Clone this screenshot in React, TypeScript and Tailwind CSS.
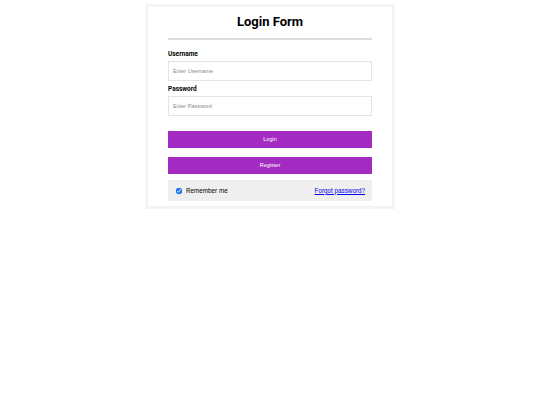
export default function App() {
  return (
    <div className="min-h-screen bg-white flex justify-center items-start pt-[4px] font-['Roboto',sans-serif]">
      <div className="w-[250px] border-[3px] border-[#f4f4f4] px-[20px] pt-[7px] pb-[5px]">
        <h1 className="text-center text-[13px] font-bold leading-[16px] text-black">Login Form</h1>
        <div className="mt-[8px] h-[2px] bg-[#dddddd]"></div>
        <form className="mt-[10px] flex flex-col" onSubmit={(e) => e.preventDefault()}>
          <label className="text-[6.5px] font-bold leading-[8px] text-black">Username</label>
          <input
            type="text"
            placeholder="Enter Username"
            className="mt-[3px] h-[20px] border border-[#e4e4e4] px-[4px] text-[5.5px] font-['Liberation_Sans',sans-serif] placeholder:text-[#888] outline-none"
          />
          <label className="mt-[4px] text-[6.5px] font-bold leading-[8px] text-black">Password</label>
          <input
            type="password"
            placeholder="Enter Password"
            className="mt-[3px] h-[20px] border border-[#e4e4e4] px-[4px] text-[5.5px] font-['Liberation_Sans',sans-serif] placeholder:text-[#888] outline-none"
          />
          <button className="mt-[15px] h-[17px] bg-[#a42bc2] text-white text-[5.5px] font-['Liberation_Sans',sans-serif]">
            Login
          </button>
          <button className="mt-[9px] h-[17px] bg-[#a42bc2] text-white text-[5.5px] font-['Liberation_Sans',sans-serif]">
            Register
          </button>
          <div className="mt-[6px] h-[21px] bg-[#efefef] flex items-center justify-between pl-[8px] pr-[7px]">
            <label className="flex items-center gap-[4px] text-[6.3px] text-black font-['Liberation_Sans',sans-serif]">
              <input type="checkbox" defaultChecked className="w-[6px] h-[6px] m-0 accent-[#1a73e8]" />
              Remember me
            </label>
            <a href="#" className="text-[6.3px] text-[#0000ee] underline font-['Liberation_Sans',sans-serif]">
              Forgot password?
            </a>
          </div>
        </form>
      </div>
    </div>
  );
}
